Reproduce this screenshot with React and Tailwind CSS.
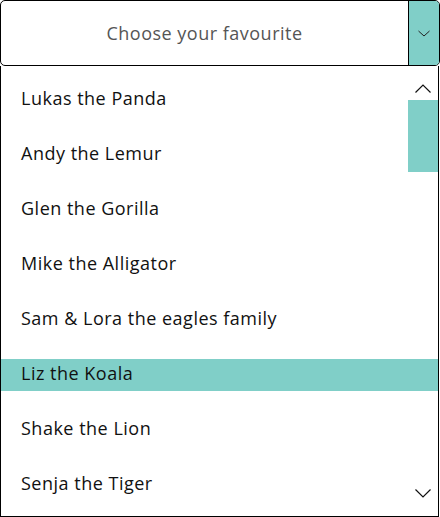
const animals = [
  'Lukas the Panda',
  'Andy the Lemur',
  'Glen the Gorilla',
  'Mike the Alligator',
  'Sam & Lora the eagles family',
  'Liz the Koala',
  'Shake the Lion',
  'Senja the Tiger',
];

function Chevron({ up, className }) {
  return (
    <svg viewBox="0 0 16 9" className={className} fill="none" stroke="#111" strokeWidth="1.2">
      <path d={up ? 'M0.5 8.5 L8 1 L15.5 8.5' : 'M0.5 0.5 L8 8 L15.5 0.5'} />
    </svg>
  );
}

export default function App() {
  return (
    <div className="w-[440px] h-[517px] bg-white font-['Open_Sans',sans-serif] tracking-[0.5px]">
      <div className="flex h-[66px] w-[440px] overflow-hidden rounded-[5px] border border-black">
        <div className="flex flex-1 items-center justify-center text-[18px] text-[#555]">
          Choose your favourite
        </div>
        <div className="flex w-[31px] items-center justify-center border-l border-black bg-[#80cfc8]">
          <svg viewBox="0 0 12 6" className="h-[7px] w-[12px]" fill="none" stroke="#222" strokeWidth="1">
            <path d="M0.5 0.5 L6 5.5 L11.5 0.5" />
          </svg>
        </div>
      </div>
      <div className="relative h-[451px] w-[439px] border-b border-l border-r border-black">
        <ul className="flex flex-col gap-[23px] pt-[18px]">
          {animals.map((a, i) => (
            <li
              key={a}
              className={`flex h-[32px] items-center pb-[3px] pl-[20px] text-[18px] text-[#111] ${
                i === 5 ? 'bg-[#80cfc8]' : ''
              }`}
            >
              {a}
            </li>
          ))}
        </ul>
        <div className="absolute right-0 top-0 flex h-full w-[30px] flex-col items-center">
          <Chevron up className="mt-[18px] h-[9px] w-[16px]" />
          <div className="mt-[7px] h-[72px] w-[30px] bg-[#80cfc8]" />
          <div className="flex-1" />
          <Chevron className="mb-[18px] h-[9px] w-[16px]" />
        </div>
      </div>
    </div>
  );
}
